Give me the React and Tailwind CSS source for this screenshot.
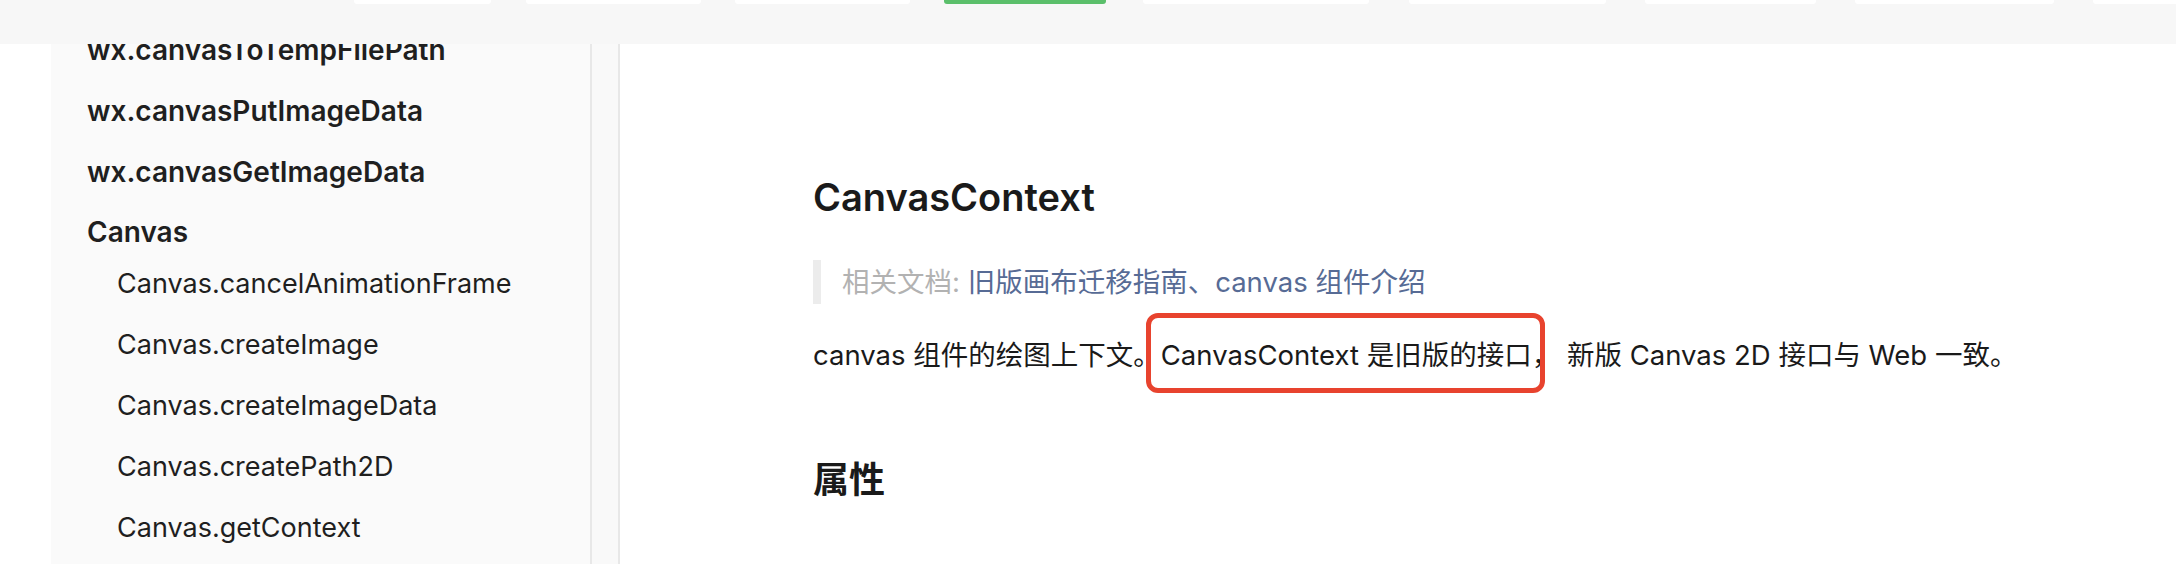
export default function App() {
  const font = "font-['Inter','Noto_Sans_CJK_SC',sans-serif]";
  return (
    <div className={`w-[2176px] h-[564px] overflow-hidden bg-white flex flex-col ${font} text-[#1a1a1a]`}>
      {/* top bar */}
      <div className="h-[44px] shrink-0 bg-[#f7f7f7] flex items-start">
        <div className="ml-[354px] w-[137px] h-[4px] bg-white rounded-b-[3px]" />
        <div className="ml-[35px] w-[175px] h-[4px] bg-white rounded-b-[3px]" />
        <div className="ml-[34px] w-[175px] h-[4px] bg-white rounded-b-[3px]" />
        <div className="ml-[34px] w-[162px] h-[4px] bg-[#5bbf6b] rounded-b-[3px]" />
        <div className="ml-[37px] w-[226px] h-[4px] bg-white rounded-b-[3px]" />
        <div className="ml-[40px] w-[197px] h-[4px] bg-white rounded-b-[3px]" />
        <div className="ml-[39px] w-[171px] h-[4px] bg-white rounded-b-[3px]" />
        <div className="ml-[39px] w-[199px] h-[4px] bg-white rounded-b-[3px]" />
        <div className="ml-[39px] flex-1 h-[4px] bg-white rounded-bl-[3px]" />
      </div>

      <div className="flex flex-1 overflow-hidden">
        {/* sidebar */}
        <div className="w-[590px] shrink-0 flex overflow-hidden">
          <div className="w-[51px] shrink-0 bg-white" />
          <div className="flex-1 bg-[#fafafa] text-[#1f1f1f]">
            <div className="-mt-[25px]">
              <div className="h-[61px] flex items-center pl-[36px] text-[28px] font-semibold">wx.canvasToTempFilePath</div>
              <div className="h-[61px] flex items-center pl-[36px] text-[28px] font-semibold">wx.canvasPutImageData</div>
              <div className="h-[61px] flex items-center pl-[36px] text-[28px] font-semibold">wx.canvasGetImageData</div>
              <div className="h-[52px] pt-[11px] leading-[39px] pl-[36px] text-[28px] font-semibold">Canvas</div>
              <div className="h-[61px] flex items-center pl-[66px] text-[27px]">Canvas.cancelAnimationFrame</div>
              <div className="h-[61px] flex items-center pl-[66px] text-[27px]">Canvas.createImage</div>
              <div className="h-[61px] flex items-center pl-[66px] text-[27px]">Canvas.createImageData</div>
              <div className="h-[61px] flex items-center pl-[66px] text-[27px]">Canvas.createPath2D</div>
              <div className="h-[61px] flex items-center pl-[66px] text-[27px]">Canvas.getContext</div>
            </div>
          </div>
        </div>
        {/* scrollbar track */}
        <div className="w-[30px] shrink-0 border-l-2 border-r-2 border-[#e8e8e8] bg-[#f9f9f9]" />

        {/* content */}
        <div className="flex-1 relative pl-[193px] pt-[127px]">
          <h1 className="text-[38px] leading-[52px] font-semibold text-[#1a1a1a]">CanvasContext</h1>
          <div className="mt-[37px] border-l-[8px] border-[#ececec] pl-[21px] text-[27.5px] leading-[44px]">
            <span className="text-[#b2b2b2]">相关文档: </span>
            <span className="text-[#576b95]">旧版画布迁移指南、canvas 组件介绍</span>
          </div>
          <p className="mt-[29px] text-[27.5px] leading-[44px] text-[#1a1a1a]">
            canvas 组件的绘图上下文。CanvasContext 是旧版的接口， 新版 Canvas 2D 接口与 Web 一致。
          </p>
          <h2 className="mt-[78px] text-[36px] leading-[50px] font-semibold text-[#1a1a1a]">属性</h2>

          {/* annotation box */}
          <div className="absolute left-[526px] top-[269px] w-[399px] h-[80px] border-[5px] border-[#e8432e] rounded-[12px]" />
        </div>
      </div>
    </div>
  );
}
